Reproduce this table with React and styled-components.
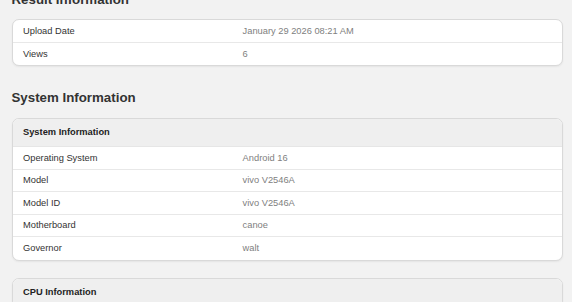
import styled, { createGlobalStyle } from "styled-components";

const GlobalStyle = createGlobalStyle`
  html, body {
    margin: 0;
    padding: 0;
    background: #f2f2f2;
  }
  body {
    font-family: "Liberation Sans", Arial, sans-serif;
    color: #333;
  }
`;

const sections = [
  {
    title: "Result Information",
    cards: [
      {
        rows: [
          ["Upload Date", "January 29 2026 08:21 AM"],
          ["Views", "6"],
        ],
      },
    ],
  },
  {
    title: "System Information",
    cards: [
      {
        header: "System Information",
        rows: [
          ["Operating System", "Android 16"],
          ["Model", "vivo V2546A"],
          ["Model ID", "vivo V2546A"],
          ["Motherboard", "canoe"],
          ["Governor", "walt"],
        ],
      },
      {
        header: "CPU Information",
        rows: [],
      },
    ],
  },
];

const App = () => {
  return (
    <>
      <GlobalStyle />
      <Page>
        {sections.map((section) => (
          <Section key={section.title}>
            <Heading>{section.title}</Heading>
            <CardStack>
              {section.cards.map((card, idx) => (
                <Card key={idx}>
                  {card.header && <CardHeader>{card.header}</CardHeader>}
                  {card.rows.map(([label, value]) => (
                    <Row key={label}>
                      <Label>{label}</Label>
                      <Value>{value}</Value>
                    </Row>
                  ))}
                </Card>
              ))}
            </CardStack>
          </Section>
        ))}
      </Page>
    </>
  );
};

const Page = styled.div`
  display: flex;
  flex-direction: column;
  gap: 24px;
  margin-top: -8.5px;
  padding: 0 9.5px 0 11.5px;
`;

const Section = styled.section`
  display: flex;
  flex-direction: column;
`;

const Heading = styled.h2`
  margin: 0 0 11.5px;
  font-size: 13.3px;
  line-height: 16px;
  font-weight: bold;
  color: #333;
`;

const CardStack = styled.div`
  display: flex;
  flex-direction: column;
  gap: 17px;
`;

const Card = styled.div`
  background: #fff;
  border: 1px solid #d9d9d9;
  border-radius: 7px;
  box-shadow: 0 1px 2px rgba(0, 0, 0, 0.06);
  overflow: hidden;
`;

const CardHeader = styled.div`
  box-sizing: border-box;
  display: flex;
  align-items: center;
  height: 28.5px;
  background: #efefef;
  padding: 0 10.5px;
  font-size: 9.3px;
  font-weight: bold;
  color: #222;
  border-bottom: 1px solid #e6e6e6;
`;

const Row = styled.div`
  box-sizing: border-box;
  display: grid;
  grid-template-columns: 40% 60%;
  align-items: center;
  height: 22.5px;
  font-size: 9.3px;
  border-bottom: 1px solid #e8e8e8;

  &:last-child {
    border-bottom: none;
  }
`;

const Label = styled.div`
  padding: 0 10.5px;
  color: #333;
`;

const Value = styled.div`
  padding: 0 10.5px;
  color: #808080;
`;

export default App;
